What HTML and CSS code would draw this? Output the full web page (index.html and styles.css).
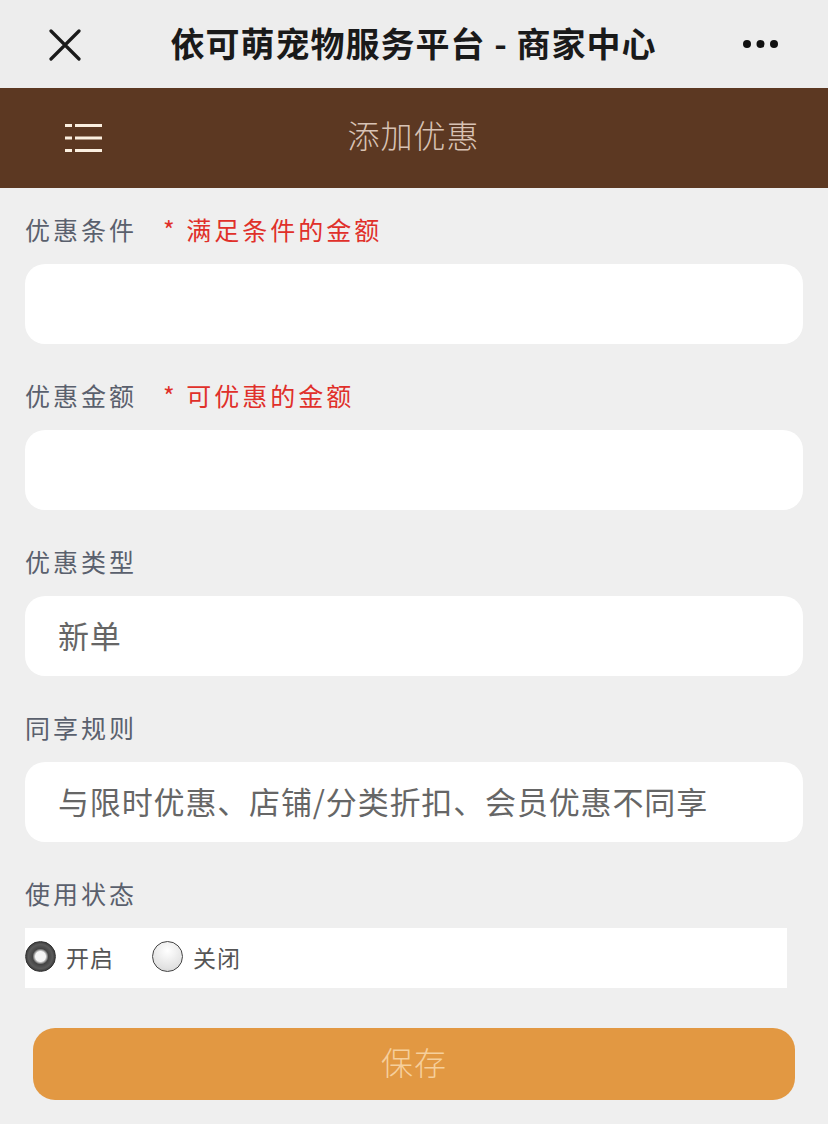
FILE: index.html
```html
<!DOCTYPE html>
<html lang="zh-CN">
<head>
<meta charset="utf-8">
<title>添加优惠</title>
<link rel="stylesheet" href="styles.css">
</head>
<body>
<div class="topbar">
  <svg class="close" width="32" height="32" viewBox="0 0 32 32"><path d="M2 2 L30 30 M30 2 L2 30" stroke="#1a1a1a" stroke-width="3.2" fill="none" stroke-linecap="round"/></svg>
  <div class="top-title">依可萌宠物服务平台 - 商家中心</div>
  <svg class="more" width="40" height="10" viewBox="0 0 40 10"><circle cx="5" cy="5" r="4"/><circle cx="18.5" cy="5" r="4"/><circle cx="32" cy="5" r="4"/></svg>
</div>
<div class="header">
  <svg class="menu" width="38" height="30" viewBox="0 0 38 30"><g fill="#fbefe0"><rect x="0" y="0" width="7" height="3"/><rect x="10" y="0" width="27" height="3"/><rect x="0" y="12.5" width="7" height="3"/><rect x="10" y="12.5" width="27" height="3"/><rect x="0" y="25" width="7" height="3"/><rect x="10" y="25" width="27" height="3"/></g></svg>
  <div class="header-title">添加优惠</div>
  <div></div>
</div>
<div class="form">
  <div class="field">
    <div class="label">优惠条件<span class="req">* 满足条件的金额</span></div>
    <div class="input"></div>
  </div>
  <div class="field">
    <div class="label">优惠金额<span class="req">* 可优惠的金额</span></div>
    <div class="input"></div>
  </div>
  <div class="field">
    <div class="label">优惠类型</div>
    <div class="input">新单</div>
  </div>
  <div class="field">
    <div class="label">同享规则</div>
    <div class="input">与限时优惠、店铺/分类折扣、会员优惠不同享</div>
  </div>
  <div class="field">
    <div class="label">使用状态</div>
    <div class="radios">
      <span class="radio checked"></span><span class="radio-text">开启</span>
      <span class="radio"></span><span class="radio-text">关闭</span>
    </div>
  </div>
</div>
<div class="btn">保存</div>
</body>
</html>
```

FILE: styles.css
```css
* { box-sizing: border-box; }
body {
  margin: 0;
  background: #efefef;
  font-family: "Noto Sans CJK SC", "Noto Sans", sans-serif;
  width: 828px;
  min-height: 1124px;
}
.topbar {
  height: 88px;
  background: #ededed;
  display: flex;
  align-items: center;
  padding: 0 46px 0 49px;
}
.close { display: block; margin-top: 1px; }
.top-title {
  flex: 1;
  text-align: center;
  font-size: 34px;
  font-weight: 700;
  color: #1a1a1a;
  margin-left: 4px;
  letter-spacing: 1px;
  padding-bottom: 3px;
}
.more { display: block; fill: #111; }
.header {
  height: 100px;
  background: #5c3822;
  display: grid;
  grid-template-columns: 1fr auto 1fr;
  align-items: center;
  padding-left: 65px;
}
.menu { display: block; margin-top: 2px; }
.header-title {
  font-size: 32px;
  font-weight: 200;
  color: #d8c2b4;
  letter-spacing: 1px;
  transform: translateX(-33px);
  margin-top: -4px;
  margin-bottom: 4px;
}
.form {
  padding: 17px 25px 0 25px;
  display: flex;
  flex-direction: column;
  gap: 27px;
}
.field { display: flex; flex-direction: column; }
.label {
  font-size: 25px;
  line-height: 48px;
  padding-bottom: 4px;
  color: #5a606d;
  letter-spacing: 3px;
  margin-bottom: 7px;
}
.req {
  color: #e0302a;
  margin-left: 26px;
}
.input {
  height: 80px;
  background: #fff;
  border-radius: 20px;
  padding-left: 33px;
  font-size: 31px;
  line-height: 78px;
  color: #666;
  letter-spacing: 0.85px;
}
.radios {
  width: 762px;
  height: 60px;
  background: #fff;
  display: flex;
  align-items: center;
}
.radio {
  width: 31px;
  height: 31px;
  border-radius: 50%;
  border: 1.5px solid #444;
  background: radial-gradient(circle at 50% 30%, #ffffff 0%, #e2e2e2 70%, #c8c8c8 100%);
  margin-top: -3px;
}
.radio.checked {
  border: 1.5px solid #333;
  background: radial-gradient(circle at 50% 50%, #f4f4f4 0 5px, #bbb 6px, #444 8px, #5a5a5a 12px, #3a3a3a 15px);
}
.radio-text {
  font-size: 23px;
  color: #555;
  margin-left: 10px;
  margin-right: 38px;
  letter-spacing: 1px;
  margin-top: -3px;
}
.btn {
  margin: 40px 33px 0 33px;
  height: 72px;
  border-radius: 22px;
  background: #e29842;
  color: #f6cf9c;
  font-size: 32px;
  font-weight: 200;
  line-height: 66px;
  padding-bottom: 6px;
  text-align: center;
  letter-spacing: 1px;
}
```
